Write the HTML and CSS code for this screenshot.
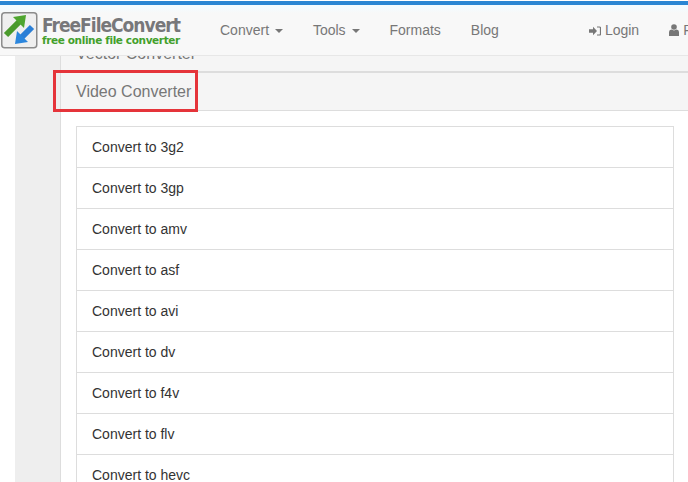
FILE: index.html
```html
<!DOCTYPE html>
<html lang="en">
<head>
<meta charset="utf-8">
<title>FreeFileConvert - Video Converter</title>
<link rel="stylesheet" href="styles.css">
</head>
<body>
<header class="navbar">
  <a class="brand" href="#">
    <svg class="brand-icon" viewBox="0 0 38 38" width="38" height="38" aria-hidden="true">
      <rect x="0.75" y="0.75" width="35" height="35" rx="3" fill="#efefef" stroke="#8c8c8c" stroke-width="1.5"/>
      <path d="M5 23 L18 10" fill="none" stroke="#4a9a2c" stroke-width="6"/>
      <path d="M25 3 L12 5 L23 16 Z" fill="#4fa52f"/>
      <path d="M31 15 L20 26" fill="none" stroke="#2b7fd6" stroke-width="6"/>
      <path d="M14 32 L27 30 L16 19 Z" fill="#2b86dd"/>
    </svg>
    <span class="brand-text">
      <span class="brand-name">FreeFileConvert</span>
      <span class="brand-tag">free online file converter</span>
    </span>
  </a>
  <nav class="nav-main">
    <a href="#">Convert <i class="caret"></i></a>
    <a href="#">Tools <i class="caret"></i></a>
    <a href="#">Formats</a>
    <a href="#">Blog</a>
  </nav>
  <nav class="nav-user">
    <a href="#">
      <svg class="nav-icon" viewBox="0 0 12 10" width="12" height="10" aria-hidden="true">
        <path d="M0 3.2H4V0.8L8 5L4 9.2V6.8H0Z" fill="#777"/>
        <path d="M8 1H10.5Q11.5 1 11.5 2V8Q11.5 9 10.5 9H8" fill="none" stroke="#777" stroke-width="1.2"/>
      </svg>Login</a>
    <a href="#">
      <svg class="nav-icon" viewBox="0 0 10 12" width="10" height="12" aria-hidden="true">
        <circle cx="5" cy="3" r="2.8" fill="#777"/>
        <path d="M0 12V8Q0 6 2.5 5.6L5 6.5L7.5 5.6Q10 6 10 8V12Z" fill="#777"/>
      </svg>Profile</a>
  </nav>
</header>
<main class="page">
  <section class="panel">
    <h3 class="heading heading-prev">Vector Converter</h3>
    <h3 class="heading heading-current">Video Converter</h3>
    <div class="panel-body">
      <ul class="list">
        <li>Convert to 3g2</li>
        <li>Convert to 3gp</li>
        <li>Convert to amv</li>
        <li>Convert to asf</li>
        <li>Convert to avi</li>
        <li>Convert to dv</li>
        <li>Convert to f4v</li>
        <li>Convert to flv</li>
        <li>Convert to hevc</li>
      </ul>
    </div>
  </section>
  <div class="highlight"></div>
</main>
</body>
</html>
```
FILE: styles.css
```css
* { box-sizing: border-box; }
html, body { margin: 0; height: 482px; overflow: hidden; background: #fff; }
body { font-family: "Liberation Sans", Arial, sans-serif; font-size: 14px; color: #333; }
a { color: inherit; text-decoration: none; }

.navbar {
  position: relative;
  z-index: 2;
  height: 55px;
  margin-top: 1px;
  display: flex;
  align-items: center;
  background: linear-gradient(#f3fbff 0, #f3fbff 3px, #f8f8f8 8px);
  border-top: 4px solid #2a86d4;
  border-bottom: 1px solid #e7e7e7;
  white-space: nowrap;
  overflow: hidden;
}
.brand { display: flex; align-items: center; gap: 3px; margin-left: 1px; width: 219px; flex: none; }
.brand-icon { flex: none; margin-top: 1px; }
.brand-text { display: flex; flex-direction: column; margin-top: 1px; }
.brand-name { font: bold 19px/18px "DejaVu Sans Condensed", "DejaVu Sans", sans-serif; color: #77777a; letter-spacing: -1px; }
.brand-tag { font: bold 10.5px/12px "DejaVu Sans", sans-serif; color: #43a02c; letter-spacing: -0.38px; }

.nav-main { display: flex; gap: 30px; color: #777; }
.caret {
  display: inline-block;
  width: 0; height: 0;
  margin-left: 2px;
  vertical-align: middle;
  border-top: 4px solid #777;
  border-left: 4px solid transparent;
  border-right: 4px solid transparent;
}
.nav-user { display: flex; gap: 30px; margin-left: 90px; color: #777; }
.nav-icon { margin-right: 4px; vertical-align: -1px; }

.page {
  position: relative;
  height: 426px;
  padding-left: 15px;
  overflow: hidden;
}
.panel {
  padding-left: 45px;
  margin-right: -60px;
  background: linear-gradient(#eee, #eee) left top / 45px 100% no-repeat;
}
.heading {
  margin: 0;
  font-weight: 400;
  font-size: 16px;
  color: #777;
  background: #f5f5f5;
  border-left: 1px solid #ddd;
  padding-left: 15px;
}
.heading-prev {
  margin-top: -2px;
  height: 19px;
  line-height: 0;
  border-bottom: 2px solid #ddd;
}
.heading-current {
  height: 38px;
  line-height: 37px;
  border-bottom: 1px solid #ddd;
}
.panel-body {
  height: 400px;
  padding: 15px 74px 0 15px;
  background: #fff;
  border-left: 1px solid #ddd;
}
.list { margin: 0; padding: 0; list-style: none; border-top: 1px solid #ddd; }
.list li {
  height: 41px;
  line-height: 40px;
  padding-left: 15px;
  background: #fff;
  border: 1px solid #ddd;
  border-top: 0;
}
.highlight {
  position: absolute;
  left: 53px;
  top: 14px;
  width: 145px;
  height: 42px;
  border: 3px solid #e5343a;
}
```
